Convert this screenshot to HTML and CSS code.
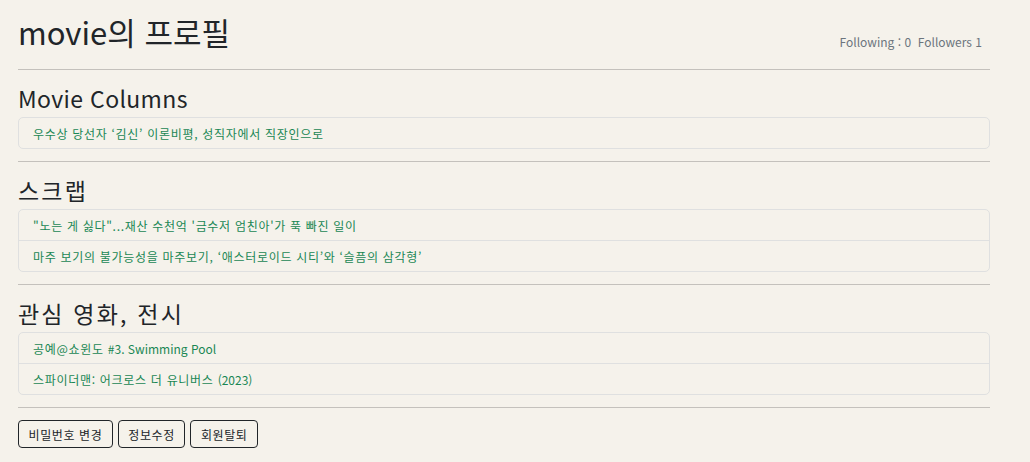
FILE: index.html
```html
<!DOCTYPE html>
<html lang="ko">
<head>
<meta charset="utf-8">
<title>movie의 프로필</title>
<link rel="stylesheet" href="styles.css">
</head>
<body>
<div class="container">
  <header class="profile-head">
    <h1 class="title">movie의 프로필</h1>
    <div class="follow">Following : 0&nbsp; Followers 1</div>
  </header>
  <hr class="rule">
  <section class="section">
    <h2 class="sec-title">Movie Columns</h2>
    <ul class="list">
      <li class="item"><a href="#">우수상 당선자 ‘김신’ 이론비평, 성직자에서 직장인으로</a></li>
    </ul>
  </section>
  <hr class="rule">
  <section class="section">
    <h2 class="sec-title sec-title--ko">스크랩</h2>
    <ul class="list">
      <li class="item"><a href="#">"노는 게 싫다"...재산 수천억 '금수저 엄친아'가 푹 빠진 일이</a></li>
      <li class="item"><a href="#">마주 보기의 불가능성을 마주보기, ‘애스터로이드 시티’와 ‘슬픔의 삼각형’</a></li>
    </ul>
  </section>
  <hr class="rule">
  <section class="section">
    <h2 class="sec-title sec-title--ko">관심 영화, 전시</h2>
    <ul class="list">
      <li class="item"><a href="#">공예@쇼윈도 <span class="latin">#3. Swimming Pool</span></a></li>
      <li class="item"><a href="#">스파이더맨: 어크로스 더 유니버스 <span class="latin">(2023)</span></a></li>
    </ul>
  </section>
  <hr class="rule">
  <div class="actions">
    <button class="btn" type="button">비밀번호 변경</button>
    <button class="btn" type="button">정보수정</button>
    <button class="btn" type="button">회원탈퇴</button>
  </div>
</div>
</body>
</html>
```

FILE: styles.css
```css
html, body {
  margin: 0;
  padding: 0;
  background: #f5f2eb;
}
body {
  font-family: "Noto Sans CJK KR", "Noto Sans", sans-serif;
  color: #212529;
}
.container {
  width: 972px;
  margin-left: 18px;
}
.profile-head {
  display: flex;
  justify-content: space-between;
  align-items: flex-end;
  padding-top: 13px;
}
.title {
  margin: 0;
  font-size: 31px;
  font-weight: 400;
  line-height: 38px;
  height: 38px;
}
.follow {
  font-size: 12px;
  color: #6c757d;
  line-height: 18px;
  padding-right: 8px;
}
.rule {
  margin: 18px 0 0;
  border: 0;
  border-top: 1px solid #c4c1bc;
  height: 0;
}
.section {
  padding-top: 13px;
}
.sec-title {
  margin: 0 0 4px;
  font-size: 23px;
  font-weight: 400;
  line-height: 30px;
  height: 30px;
  letter-spacing: 0.35px;
}
.sec-title--ko {
  letter-spacing: 2.2px;
}
.list {
  list-style: none;
  margin: 0;
  padding: 0;
  border: 1px solid #dfe0e0;
  border-radius: 5px;
}
.item {
  height: 30px;
  display: flex;
  align-items: center;
  padding: 0 14px;
  font-size: 12px;
  letter-spacing: 0.7px;
}
.item + .item {
  border-top: 1px solid #dfe0e0;
}
.item a {
  color: #198754;
  text-decoration: none;
  white-space: pre;
}
.latin {
  letter-spacing: 0;
}
.section + .rule {
  margin-top: 12px;
}
.actions {
  display: flex;
  gap: 5px;
  margin-top: 12px;
}
.btn {
  font-family: inherit;
  font-size: 12px;
  letter-spacing: 0.6px;
  color: #212529;
  background: transparent;
  border: 1px solid #212529;
  border-radius: 4px;
  height: 28px;
  padding: 0 9.5px;
  cursor: pointer;
}
```
